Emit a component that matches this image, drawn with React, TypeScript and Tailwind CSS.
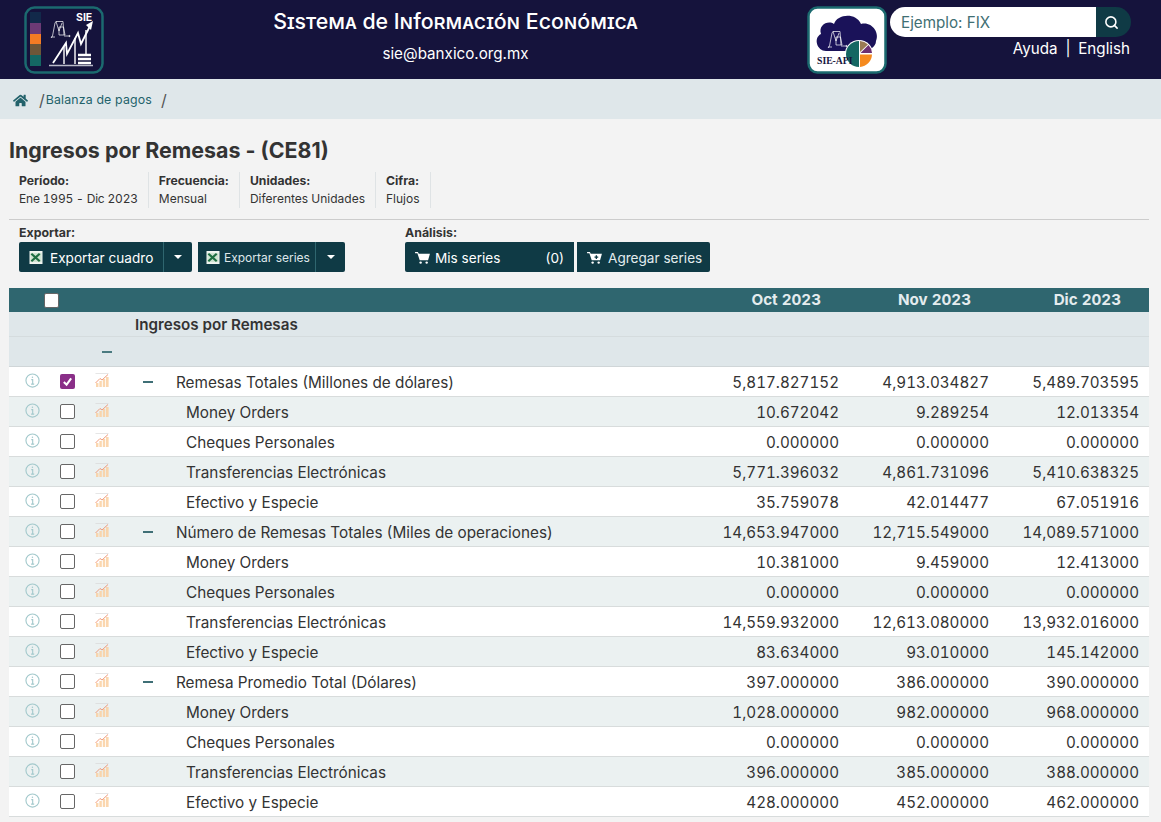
import { Search } from 'lucide-react';
import { FaHome } from 'react-icons/fa';

const rows = [
  { label: 'Remesas Totales (Millones de dólares)', parent: true, checked: true, values: ['5,817.827152', '4,913.034827', '5,489.703595'] },
  { label: 'Money Orders', values: ['10.672042', '9.289254', '12.013354'] },
  { label: 'Cheques Personales', values: ['0.000000', '0.000000', '0.000000'] },
  { label: 'Transferencias Electrónicas', values: ['5,771.396032', '4,861.731096', '5,410.638325'] },
  { label: 'Efectivo y Especie', values: ['35.759078', '42.014477', '67.051916'] },
  { label: 'Número de Remesas Totales (Miles de operaciones)', parent: true, values: ['14,653.947000', '12,715.549000', '14,089.571000'] },
  { label: 'Money Orders', values: ['10.381000', '9.459000', '12.413000'] },
  { label: 'Cheques Personales', values: ['0.000000', '0.000000', '0.000000'] },
  { label: 'Transferencias Electrónicas', values: ['14,559.932000', '12,613.080000', '13,932.016000'] },
  { label: 'Efectivo y Especie', values: ['83.634000', '93.010000', '145.142000'] },
  { label: 'Remesa Promedio Total (Dólares)', parent: true, values: ['397.000000', '386.000000', '390.000000'] },
  { label: 'Money Orders', values: ['1,028.000000', '982.000000', '968.000000'] },
  { label: 'Cheques Personales', values: ['0.000000', '0.000000', '0.000000'] },
  { label: 'Transferencias Electrónicas', values: ['396.000000', '385.000000', '388.000000'] },
  { label: 'Efectivo y Especie', values: ['428.000000', '452.000000', '462.000000'] },
];

const meta = [
  { title: 'Período:', value: 'Ene 1995 - Dic 2023', valueClass: 'tracking-[-0.2px]' },
  { title: 'Frecuencia:', value: 'Mensual', valueClass: '' },
  { title: 'Unidades:', value: 'Diferentes Unidades', valueClass: '' },
  { title: 'Cifra:', value: 'Flujos', valueClass: '' },
];

function BanxicoMark({ color = 'white' }: { color?: string }) {
  return (
    <g fill="none" stroke={color} strokeWidth="0.7">
      <path d="M0 17 L1.5 15 L4 2 L5 0.5 H12 L13 14 M5 0.5 L8 10 L11 2 M8 6 H12.5 L14 14 H8 Z M13 15 H18 M0 16 H4" />
      <circle cx="18.5" cy="15" r="0.6" fill={color} />
    </g>
  );
}

function SieLogo() {
  return (
    <svg viewBox="0 0 80 68" className="w-[80px] h-[68px] shrink-0">
      <rect x="1.5" y="1.5" width="77" height="65" rx="9" fill="#15133c" stroke="#1b6a6f" strokeWidth="2.5" />
      <rect x="6" y="6" width="11" height="11" fill="#12294a" />
      <rect x="6" y="17" width="11" height="11" fill="#6c3a75" />
      <rect x="6" y="28" width="11" height="10" fill="#f47b24" />
      <rect x="6" y="38" width="11" height="11" fill="#6d5638" />
      <rect x="6" y="49" width="11" height="11" fill="#146763" />
      <text x="52" y="14.5" fill="white" fontSize="10.5" fontWeight="700" fontFamily="Inter, sans-serif">SIE</text>
      <g transform="translate(27 15)">
        <BanxicoMark />
      </g>
      <path d="M29 57 L42 37 L43 48 L54 27 L57 38 L66 20" fill="none" stroke="white" strokeWidth="1.8" />
      <path d="M62 19 L69 15 L67 24 Z" fill="white" />
      <path d="M40 40 V58 M51 32 V58 M62 24 V48" stroke="white" strokeWidth="1.4" />
      <path d="M54 49 H67 M54 53 H67 M54 57 H67" stroke="white" strokeWidth="2.4" />
      <path d="M25 59.5 H69" stroke="#b9b9c8" strokeWidth="1.5" />
    </svg>
  );
}

function ApiLogo() {
  return (
    <svg viewBox="0 0 80 68" className="w-[80px] h-[68px] shrink-0">
      <rect x="1.5" y="1.5" width="77" height="65" rx="9" fill="white" stroke="#1b6a6f" strokeWidth="2.5" />
      <path d="M19 45 C10 45 6 32 14 28 C11 19 21 14 27 18 C30 8 49 6 54 18 C64 15 73 26 69 35 C69 41 62 45 56 45 Z" fill="#1a1259" />
      <g transform="translate(21 25)">
        <BanxicoMark />
      </g>
      <circle cx="52" cy="48" r="14" fill="white" />
      <path d="M52 35 A13 13 0 0 0 52 61 Z" fill="#146763" />
      <path d="M53 35 A13 13 0 0 1 61 38.5 L53 46 Z" fill="#9a7b54" />
      <path d="M61.5 39 A13 13 0 0 1 65 47 H53.5 Z" fill="#6c2f72" />
      <path d="M53 48.5 H65 A13 13 0 0 1 53 61 Z" fill="#f58a1f" />
      <text x="10" y="58" fill="#15133c" fontSize="9.7" fontWeight="700" fontFamily="'Liberation Serif', serif">SIE-API</text>
    </svg>
  );
}

function ExcelIcon() {
  return (
    <svg viewBox="0 0 14 14" className="w-[14px] h-[13px] shrink-0">
      <rect width="14" height="14" fill="#f1f5f1" />
      <path d="M1 2 H13 V12 H1 Z" fill="#cfe3d2" />
      <path d="M2 3 L11 11 M11 3 L2 11" stroke="#1f6f43" strokeWidth="2.4" />
    </svg>
  );
}

function CartIcon({ plus }: { plus?: boolean }) {
  return (
    <svg viewBox="0 0 16 14" className="w-[15px] h-[13px] shrink-0" fill="white">
      <path d="M0 1 H3 L4 3 H16 L14 10 H5 L2.5 2.5 H0 Z" />
      <circle cx="6" cy="12.5" r="1.3" />
      <circle cx="12.5" cy="12.5" r="1.3" />
      {plus && <path d="M8 6.5 H12 M10 4.5 V8.5" stroke="#0f3a45" strokeWidth="1.4" />}
    </svg>
  );
}

function InfoIcon() {
  return (
    <svg viewBox="0 0 16 16" className="w-[15px] h-[15px] -mt-[3px]" fill="none" stroke="#a3c9cc" strokeWidth="1.2">
      <circle cx="8" cy="8" r="7" />
      <path d="M6.7 7 H8.2 V11.8 M6.5 11.8 H9.8" />
      <circle cx="7.9" cy="4.6" r="0.8" fill="#a3c9cc" stroke="none" />
    </svg>
  );
}

function ChartIcon() {
  return (
    <svg viewBox="0 0 14 14" className="w-[14px] h-[14px] -mt-[3px] opacity-85">
      <path d="M0.5 0.5 H13.5" stroke="#d5d5d5" strokeWidth="0.7" />
      <rect x="1" y="10" width="2.4" height="4" fill="#fbd0a0" />
      <rect x="4.4" y="8" width="2.4" height="6" fill="#fbd0a0" />
      <rect x="7.8" y="6" width="2.4" height="8" fill="#fbd0a0" />
      <rect x="11" y="4" width="2.6" height="10" fill="#fbd0a0" />
      <path d="M0.5 10 L5 5.5 L7 7 L13 1.5" fill="none" stroke="#ef8a66" strokeWidth="1" />
    </svg>
  );
}

function Checkbox({ checked }: { checked?: boolean }) {
  if (checked) {
    return (
      <span className="flex w-[15px] h-[15px] items-center justify-center rounded-[2px] bg-[#8a2f88]">
        <svg viewBox="0 0 12 12" className="w-[11px] h-[11px]" fill="none" stroke="white" strokeWidth="2.2">
          <path d="M2 6.5 L5 9.5 L10 2.5" />
        </svg>
      </span>
    );
  }
  return <span className="block w-[15px] h-[15px] rounded-[2px] border border-[#666] bg-white" />;
}

function Caret() {
  return <span className="block w-0 h-0 border-x-[4px] border-x-transparent border-t-[4px] border-t-white" />;
}

export default function App() {
  return (
    <div className="min-h-[822px] h-[822px] overflow-hidden bg-[#f3f3f3] font-['Inter',sans-serif] text-[#333]">
      {/* Header */}
      <header className="flex h-[79px] items-center bg-[#15133c] pl-[24px] text-white">
        <SieLogo />
        <div className="w-[703px] pb-[6px] text-center">
          <h1 className="text-[21.3px] leading-[26px] font-medium [font-variant:small-caps]">
            Sistema de Información Económica
          </h1>
          <p className="mt-[9px] text-[15.2px] leading-[22px]">sie@banxico.org.mx</p>
        </div>
        <ApiLogo />
        <div className="ml-[3px] w-[241px] self-start pt-[7px]">
          <div className="flex h-[30px]">
            <div className="flex-1 rounded-l-[15px] bg-white pl-[11px] text-[15.2px] leading-[31px] text-[#3f6f73]">
              Ejemplo: FIX
            </div>
            <div className="flex w-[35px] items-center justify-center rounded-r-[15px] bg-[#0f3a45] pr-[4px]">
              <Search className="w-[15px] h-[15px]" strokeWidth={2.5} />
            </div>
          </div>
          <div className="pr-[1px] text-right text-[15.2px] leading-[24px]">
            Ayuda <span className="mx-[3.5px]">|</span> English
          </div>
        </div>
      </header>

      {/* Breadcrumb */}
      <nav className="flex h-[40px] items-center bg-[#dfe7ea] pl-[13px] pt-[2px] text-[12.35px] text-[#23626b]">
        <FaHome className="w-[15px] h-[15px]" />
        <span className="ml-[11px] mr-[1px] text-[16px] text-[#555]">/</span>
        <span className="tracking-[0.15px]">Balanza de pagos</span>
        <span className="ml-[9px] text-[16px] text-[#555]">/</span>
      </nav>

      <main className="pl-[9px] pr-[12px]">
        <h2 className="mt-[18px] text-[21.4px] leading-[26px] font-bold">Ingresos por Remesas - (CE81)</h2>

        <div className="mt-[9px] flex border-b border-[#ccc] pb-[11px] leading-[18px]">
          {meta.map((m) => (
            <div key={m.title} className="h-[36px] border-r border-[#dfe3e5] px-[10px]">
              <div className="text-[12.2px] font-bold">{m.title}</div>
              <div className={`whitespace-nowrap text-[12px] tabular-nums ${m.valueClass}`}>{m.value}</div>
            </div>
          ))}
        </div>

        {/* Exportar / Análisis */}
        <div className="flex pl-[10px] pt-[5px]">
          <div className="w-[386px]">
            <div className="text-[12.35px] leading-[16px] font-bold">Exportar:</div>
            <div className="mt-[1px] flex">
              <div className="flex h-[30px] w-[144px] items-center gap-[7px] rounded-l-[2px] bg-[#0f3a45] pl-[10px] text-[13.6px] leading-[22px] text-white">
                <ExcelIcon />
                <span className="pt-[1px]">Exportar cuadro</span>
              </div>
              <div className="flex h-[30px] w-[29px] items-center justify-center rounded-r-[2px] border-l border-[#2f666f] bg-[#0f3a45]">
                <Caret />
              </div>
              <div className="ml-[6px] flex h-[30px] w-[117px] items-center gap-[4px] bg-[#0f3a45] pl-[8px] text-[12px] leading-[22px] text-[#dfe7ea]">
                <ExcelIcon />
                <span className="pt-[1px]">Exportar series</span>
              </div>
              <div className="flex h-[30px] w-[30px] items-center justify-center rounded-r-[2px] border-l border-[#2f666f] bg-[#0f3a45]">
                <Caret />
              </div>
            </div>
          </div>
          <div>
            <div className="text-[12.35px] leading-[16px] font-bold">Análisis:</div>
            <div className="mt-[1px] flex gap-[3px] text-[13.6px] text-white">
              <div className="flex h-[30px] w-[169px] items-center rounded-l-[2px] bg-[#0f3a45] px-[10px]">
                <CartIcon />
                <span className="ml-[5px] pt-[2px]">Mis series</span>
                <span className="ml-auto pt-[2px]">(0)</span>
              </div>
              <div className="flex h-[30px] w-[133px] items-center gap-[6px] rounded-r-[2px] bg-[#0f3a45] pl-[10px] text-[#e3ecee]">
                <CartIcon plus />
                <span className="pt-[2px]">Agregar series</span>
              </div>
            </div>
          </div>
        </div>

        {/* Table */}
        <div className="mt-[16px] text-[15.2px]">
          <div className="grid h-[24px] grid-cols-[35px_1fr_150px_150px_150px] items-center bg-[#2f666f] text-[#e4ecee]">
            <span />
            <span className="block w-[15px] h-[15px] rounded-[2px] border border-[#666] bg-white" />
            {['Oct 2023', 'Nov 2023', 'Dic 2023'].map((d) => (
              <span key={d} className="pr-[28px] text-right font-bold tabular-nums">
                {d}
              </span>
            ))}
          </div>
          <div className="h-[25px] border-b border-[#d5dcde] bg-[#dfe7ea] pl-[126px] leading-[25px] font-semibold">
            Ingresos por Remesas
          </div>
          <div className="flex h-[30px] items-center border-b border-[#d0d6d8] bg-[#dfe7ea] pl-[93px]">
            <span className="block h-[2px] w-[10px] bg-[#4a7a80]" />
          </div>
          {rows.map((row, i) => (
            <div
              key={i}
              className={`grid h-[30px] grid-cols-[46px_24px_46px_51px_1fr_150px_150px_150px] items-center border-b border-[#d8dcdc] ${
                i % 2 === 0 ? 'bg-white' : 'bg-[#ebf1f1]'
              }`}
            >
              <span className="flex justify-center">
                <InfoIcon />
              </span>
              <span className="flex justify-center">
                <Checkbox checked={row.checked} />
              </span>
              <span className="flex justify-center">
                <ChartIcon />
              </span>
              <span className="flex justify-center pr-[5px]">
                {row.parent && <span className="block h-[2px] w-[10px] bg-[#3f6f76]" />}
              </span>
              <span className={row.parent ? 'whitespace-nowrap pt-[3px] text-[15.3px]' : 'whitespace-nowrap pl-[10px] pt-[3px] text-[15.3px]'}>{row.label}</span>
              {row.values.map((v, j) => (
                <span key={j} className="pr-[10px] pt-[3px] text-right tabular-nums">
                  {v}
                </span>
              ))}
            </div>
          ))}
        </div>
      </main>
    </div>
  );
}
